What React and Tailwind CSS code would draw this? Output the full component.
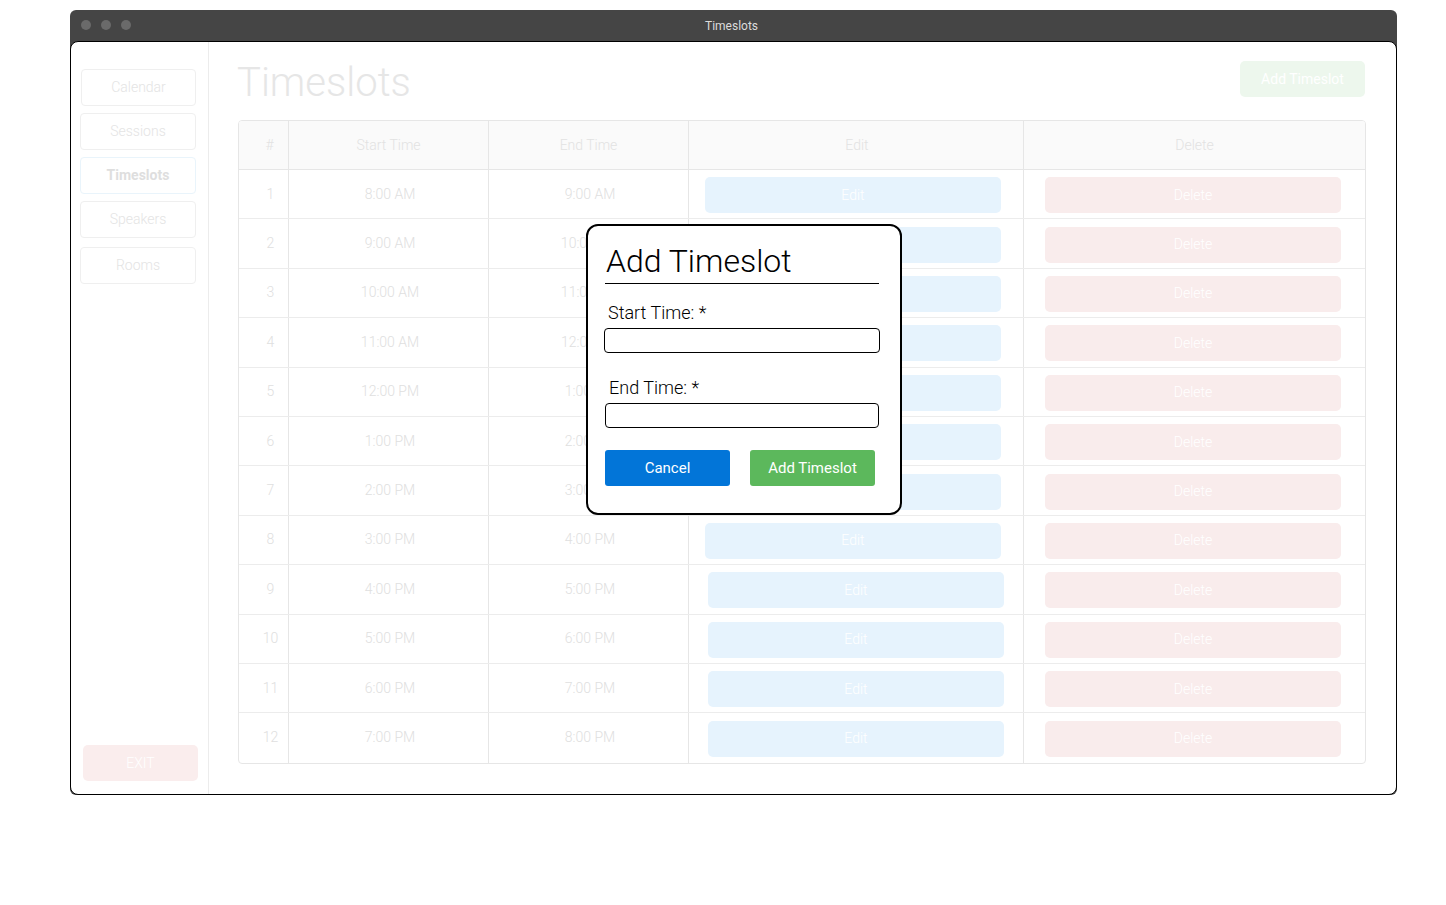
import React from "react";

const rows = [
  ["1", "8:00 AM", "9:00 AM"],
  ["2", "9:00 AM", "10:00 AM"],
  ["3", "10:00 AM", "11:00 AM"],
  ["4", "11:00 AM", "12:00 PM"],
  ["5", "12:00 PM", "1:00 PM"],
  ["6", "1:00 PM", "2:00 PM"],
  ["7", "2:00 PM", "3:00 PM"],
  ["8", "3:00 PM", "4:00 PM"],
  ["9", "4:00 PM", "5:00 PM"],
  ["10", "5:00 PM", "6:00 PM"],
  ["11", "6:00 PM", "7:00 PM"],
  ["12", "7:00 PM", "8:00 PM"],
];

const navItems = ["Calendar", "Sessions", "Timeslots", "Speakers", "Rooms"];

export default function App() {
  return (
    <div
      className="relative w-[1446px] h-[905px] bg-white pl-[70px] pt-[10px]"
      style={{ fontFamily: "Roboto, 'Liberation Sans', sans-serif" }}
    >
      {/* Window */}
      <div className="w-[1327px] h-[785px] bg-[#454545] rounded-[6px] flex flex-col">
        {/* Title bar */}
        <div className="relative h-[31px] flex items-center pl-[11px] shrink-0">
          <div className="flex gap-[10px] mt-[-1px]">
            <span className="w-[10px] h-[10px] rounded-full bg-[#6a6a6a]" />
            <span className="w-[10px] h-[10px] rounded-full bg-[#6a6a6a]" />
            <span className="w-[10px] h-[10px] rounded-full bg-[#6a6a6a]" />
          </div>
          <div className="absolute inset-0 flex items-center justify-center text-[12px] text-[#dcdcdc] pr-[4px] pt-[1px]">
            Timeslots
          </div>
        </div>
        {/* Content */}
        <div className="flex-1 bg-white border border-black rounded-[8px] flex overflow-hidden">
          {/* Sidebar */}
          <div className="w-[138px] shrink-0 border-r border-[#ececec] flex flex-col pt-[27px] pb-[13px] pl-[9px] pr-[12px]">
            {navItems.map((item, i) => (
              <div
                key={item}
                className={
                  "h-[37px] flex items-center justify-center rounded-[4px] border text-[14px] " +
                  (i === 2
                    ? "border-[#e9f4fb] text-[#dedede] font-bold"
                    : "border-[#efefef] text-[#e4e4e4] font-light") +
                  (i === 0 ? " ml-[1px]" : "") +
                  (i === 4 ? " mt-[9px]" : i > 0 ? " mt-[7px]" : "")
                }
              >
                {item}
              </div>
            ))}
            <div className="flex-1" />
            <div className="h-[36px] ml-[3px] mr-[-2px] rounded-[5px] bg-[#faeded] text-white text-[14px] font-light flex items-center justify-center">
              EXIT
            </div>
          </div>
          {/* Main */}
          <div className="flex-1 pl-[29px] pr-[30px] pt-[19px]">
            <div className="flex items-start justify-between h-[59px]">
              <div className="text-[40px] leading-[42px] font-light text-[#e6e6e6] ml-[-1px] mt-[1px]">
                Timeslots
              </div>
              <div className="w-[125px] h-[36px] rounded-[5px] bg-[#edf7ed] text-white text-[14px] flex items-center justify-center mr-[1px]">
                Add Timeslot
              </div>
            </div>
            {/* Table */}
            <div className="w-[1128px] border border-[#e6e6e6] rounded-[4px] overflow-hidden">
              <div className="flex h-[49px] bg-[#fafafa] border-b border-[#e6e6e6] text-[14px] text-[#e2e2e2] font-light">
                <div className="w-[50px] border-r border-[#e6e6e6] flex items-center justify-center pl-[12px]">#</div>
                <div className="w-[200px] border-r border-[#e6e6e6] flex items-center justify-center">Start Time</div>
                <div className="w-[200px] border-r border-[#e6e6e6] flex items-center justify-center">End Time</div>
                <div className="w-[335px] border-r border-[#e6e6e6] flex items-center justify-center pl-[2px]">Edit</div>
                <div className="flex-1 flex items-center justify-center">Delete</div>
              </div>
              {rows.map((r, i) => (
                <div
                  key={r[0]}
                  className={
                    "flex h-[49.4px] text-[14px] text-[#e0e0e0] font-light" +
                    (i < rows.length - 1 ? " border-b border-[#ececec]" : "")
                  }
                >
                  <div className="w-[50px] border-r border-[#e6e6e6] flex items-center justify-center pl-[14px]">{r[0]}</div>
                  <div className="w-[200px] border-r border-[#e6e6e6] flex items-center justify-center pl-[3px]">{r[1]}</div>
                  <div className="w-[200px] border-r border-[#e6e6e6] flex items-center justify-center pl-[3px]">{r[2]}</div>
                  <div className={"w-[335px] border-r border-[#e6e6e6] flex items-center " + (i < 8 ? "pl-[16px]" : "pl-[19px]")}>
                    <div className="w-[296px] h-[36px] mt-[2px] rounded-[5px] bg-[#e6f3fd] text-white text-[14px] flex items-center justify-center">
                      Edit
                    </div>
                  </div>
                  <div className="flex-1 flex items-center pl-[21px]">
                    <div className="w-[296px] h-[36px] mt-[2px] rounded-[5px] bg-[#f9ecec] text-white text-[14px] flex items-center justify-center">
                      Delete
                    </div>
                  </div>
                </div>
              ))}
            </div>
          </div>
        </div>
      </div>

      {/* Modal */}
      <div className="absolute left-[586px] top-[224px] w-[316px] h-[291px] bg-white border-2 border-black rounded-[12px] pt-[17px] pl-[16px] pr-[20px] flex flex-col">
        <div className="h-[41px] pb-[5px] border-b border-black ml-[1px] mr-[1px]">
          <div className="text-[32px] leading-[36px] font-light text-black ml-[1px]">Add Timeslot</div>
        </div>
        <div className="mt-[17px] ml-[4px] text-[18px] leading-[24px] font-light text-black">Start Time: *</div>
        <div className="mt-[3px] h-[25px] border border-black rounded-[4px]" />
        <div className="mt-[23px] ml-[5px] text-[18px] leading-[24px] font-light text-black">End Time: *</div>
        <div className="mt-[3px] h-[25px] border border-black rounded-[4px] ml-[1px] mr-[1px]" />
        <div className="mt-[22px] ml-[1px] flex gap-[20px]">
          <div className="w-[125px] h-[36px] rounded-[3px] bg-[#0275d8] text-white text-[15px] flex items-center justify-center">
            Cancel
          </div>
          <div className="w-[125px] h-[36px] rounded-[3px] bg-[#5cb85c] text-white text-[15px] flex items-center justify-center">
            Add Timeslot
          </div>
        </div>
      </div>
    </div>
  );
}
